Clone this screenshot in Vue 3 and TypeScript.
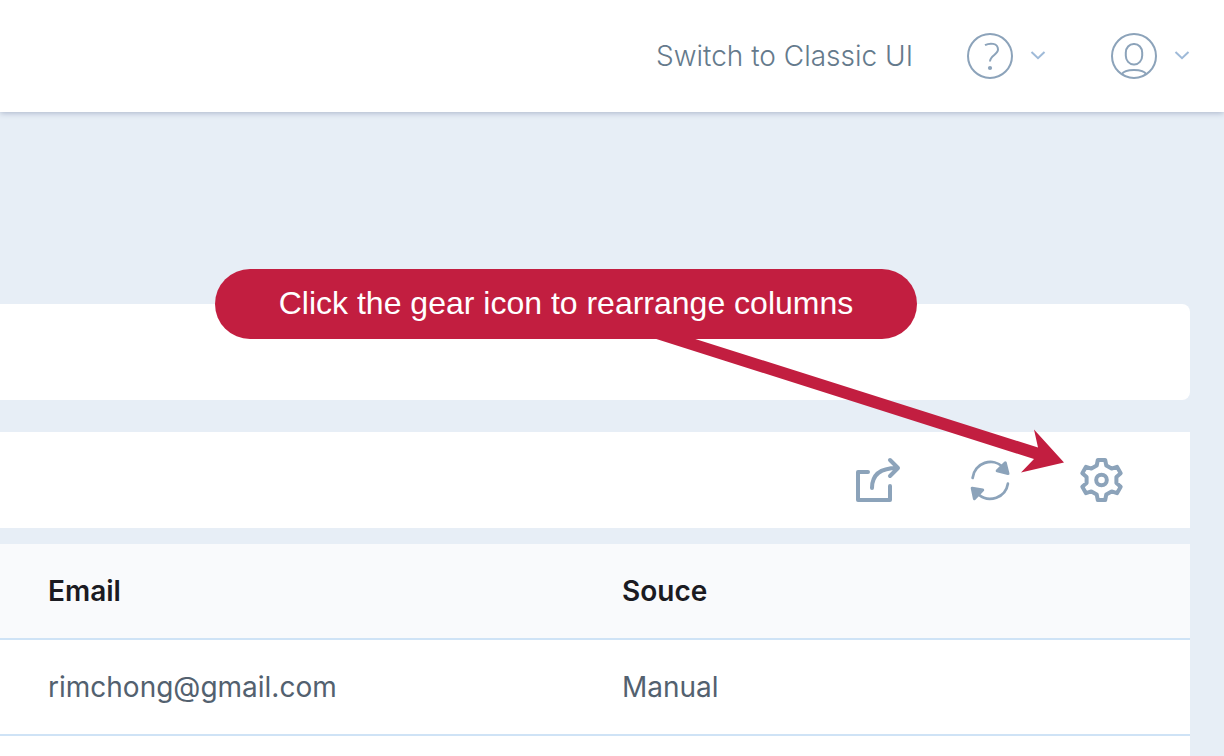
<script setup lang="ts">
interface Contact {
  email: string
  source: string
}

const contacts: Contact[] = [{ email: 'rimchong@gmail.com', source: 'Manual' }]
</script>

<template>
  <div class="page">
    <header class="topbar">
      <a class="switch" href="#">Switch to Classic UI</a>
      <button class="menu" type="button" aria-label="Help">
        <svg class="round" viewBox="0 0 46 46" aria-hidden="true">
          <circle cx="23" cy="23" r="22" />
          <path d="M18 12.2C22.5 9.8 31 9.6 31 16.5C31 21.5 23 22.5 23 28.5" />
          <circle class="dot" cx="23" cy="35" r="2.1" />
        </svg>
        <svg class="chevron" viewBox="0 0 16 10" aria-hidden="true"><path d="M1.5 1L8 7.2L14.5 1" /></svg>
      </button>
      <button class="menu" type="button" aria-label="Account">
        <svg class="round" viewBox="0 0 46 46" aria-hidden="true">
          <circle cx="23" cy="23" r="22" />
          <rect x="14.8" y="11" width="16.4" height="20.4" rx="7.8" ry="8.6" />
          <path d="M10.8 41.2C12.5 38 18 37 23 37S33.5 38 35.2 41.2" />
        </svg>
        <svg class="chevron" viewBox="0 0 16 10" aria-hidden="true"><path d="M1.5 1L8 7.2L14.5 1" /></svg>
      </button>
    </header>

    <main class="content">
      <section class="panel" aria-label="Summary"></section>

      <div class="toolbar" role="toolbar" aria-label="Table actions">
        <button class="tool" type="button" aria-label="Export">
          <svg viewBox="0 0 44 44" stroke-width="4" aria-hidden="true">
            <path d="M12 14H2V42H34V28" />
            <path d="M16 30C16 17 24 10 41 10M34 2L42 10L34 18" />
          </svg>
        </button>
        <button class="tool" type="button" aria-label="Refresh">
          <svg viewBox="-1 0 44 44" stroke-width="2.7" aria-hidden="true">
            <path d="M3.6 20A18 18 0 0 1 34.5 9.5M38.9 25.7A18 18 0 0 1 9.5 36.5" />
            <path class="solid" d="M36.3 4.9L39 15.6L28.2 12.9ZM3.2 30.2L13.7 32L5.4 40.6Z" />
          </svg>
        </button>
        <button class="tool" type="button" aria-label="Column settings">
          <svg viewBox="-21.5 -22 44 44" stroke-width="4" aria-hidden="true">
            <path
              d="M-4.8 -14.4L-3.7 -20H3.7L4.8 -14.4L10.1 -11.4L15.5 -13.2L19.2 -6.8L14.9 -3V3L19.2 6.8L15.5 13.2L10.1 11.4L4.8 14.4L3.7 20H-3.7L-4.8 14.4L-10.1 11.4L-15.5 13.2L-19.2 6.8L-14.9 3V-3L-19.2 -6.8L-15.5 -13.2L-10.1 -11.4Z"
            />
            <circle r="5.3" />
          </svg>
        </button>
      </div>

      <div class="table-wrap">
        <table>
          <thead>
            <tr>
              <th scope="col">Email</th>
              <th scope="col">Souce</th>
            </tr>
          </thead>
          <tbody>
            <tr v-for="contact in contacts" :key="contact.email">
              <td>{{ contact.email }}</td>
              <td>{{ contact.source }}</td>
            </tr>
          </tbody>
        </table>
      </div>

      <div class="callout" role="note">
        <svg class="arrow" viewBox="0 0 416 138" aria-hidden="true">
          <path d="M2 2L41 2L390 112.5L386 94.5L416 127.5L373 137.5L386 124Z" />
        </svg>
        <p class="bubble">Click the gear icon to rearrange columns</p>
      </div>
    </main>
  </div>
</template>

<style>
body {
  margin: 0;
  background: #e7eef6;
}
</style>

<style scoped>
.page {
  display: flex;
  flex-direction: column;
  min-height: 100vh;
  background: #e7eef6;
  color: #53616f;
  font-family: Inter, "Open Sans", sans-serif;
  font-size: 28px;
  line-height: 36px;
}

button {
  padding: 0;
  border: 0;
  background: none;
  cursor: pointer;
}

svg {
  display: block;
  fill: none;
  stroke: #8ca3ba;
}

.topbar {
  display: flex;
  align-items: center;
  justify-content: flex-end;
  gap: 65px;
  height: 112px;
  padding-right: 34px;
  box-sizing: border-box;
  background: #fff;
  box-shadow: 0 1px 6px #a9b4c9;
}

.switch {
  margin-right: -11px;
  color: #657a8c;
  font-weight: 300;
  text-decoration: none;
}

.menu {
  display: flex;
  align-items: center;
  gap: 17px;
}

.round {
  width: 46px;
  height: 46px;
  stroke-width: 2;
}

.round .dot {
  fill: #8ca3ba;
  stroke: none;
}

.chevron {
  width: 16px;
  height: 10px;
  stroke: #9fbad8;
  stroke-width: 2;
}

.content {
  position: relative;
  display: flex;
  flex: 1;
  flex-direction: column;
  padding: 192px 34px 0 0;
}

.panel {
  height: 96px;
  border-radius: 0 8px 8px 0;
  background: #fff;
}

.toolbar {
  display: flex;
  align-items: center;
  justify-content: flex-end;
  gap: 68px;
  height: 96px;
  margin: 32px 0 16px;
  padding-right: 66px;
  box-sizing: border-box;
  background: #fff;
}

.tool svg {
  width: 44px;
  height: 44px;
  overflow: visible;
  stroke-linecap: round;
  stroke-linejoin: round;
}

.tool .solid {
  fill: #8ca3ba;
  stroke-width: 3;
}

.table-wrap {
  flex: 1;
  background: #fff;
}

table {
  width: 100%;
  border-collapse: separate;
  border-spacing: 0;
  table-layout: fixed;
}

th,
td {
  height: 94px;
  padding: 0 0 0 48px;
  border-bottom: 2px solid #cfe3f6;
  text-align: left;
  vertical-align: middle;
}

th:first-child {
  width: 526px;
}

th {
  background: #f9fafc;
  color: #1b1b22;
  font-weight: 600;
}

.callout {
  position: absolute;
  top: 157px;
  right: 307px;
  width: 702px;
}

.bubble {
  position: relative;
  margin: 0;
  padding: 16px 0 18px;
  border-radius: 35px;
  background: #c21e40;
  color: #fff;
  font-family: "Liberation Sans", Arial, sans-serif;
  font-size: 32px;
  line-height: 36px;
  text-align: center;
}

.arrow {
  position: absolute;
  top: 66px;
  left: 433px;
  width: 416px;
  height: 138px;
  fill: #c21e40;
  stroke: none;
}
</style>
